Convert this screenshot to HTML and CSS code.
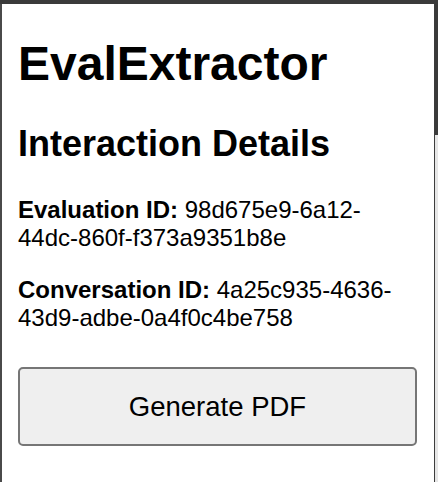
FILE: index.html
```html
<!DOCTYPE html>
<html>
<head>
<meta charset="utf-8">
<link rel="stylesheet" href="styles.css">
</head>
<body>
<div class="top-strip"></div>
<div class="frame">
  <div class="left-edge"></div>
  <main class="popup">
    <h1 class="title">EvalExtractor</h1>
    <h2 class="subtitle">Interaction Details</h2>
    <p class="field"><strong>Evaluation ID:</strong> 98d675e9-6a12-44dc-860f-f373a9351b8e</p>
    <p class="field"><strong>Conversation ID:</strong> 4a25c935-4636-43d9-adbe-0a4f0c4be758</p>
    <button class="generate">Generate PDF</button>
  </main>
  <div class="right-edge">
    <div class="right-dark"></div>
    <div class="right-light"></div>
  </div>
</div>
</body>
</html>
```
FILE: styles.css
```css
html, body {
  margin: 0;
  padding: 0;
  height: 100%;
  overflow: hidden;
}
body {
  display: flex;
  flex-direction: column;
  background: #ffffff;
  font-family: "Liberation Sans", Arial, sans-serif;
  color: #000;
}
.top-strip {
  height: 4px;
  background: #3a3a3a;
  flex: none;
}
.frame {
  flex: 1;
  display: flex;
  min-height: 0;
}
.left-edge {
  width: 2px;
  background: #4a4a4a;
  flex: none;
}
.popup {
  flex: 1;
  background: #fff;
  padding: 0 17px 0 16px;
  display: flex;
  flex-direction: column;
}
.right-edge {
  width: 4px;
  flex: none;
  display: flex;
  flex-direction: column;
  border-left: 1px solid #3c3c3c;
  box-sizing: border-box;
}
.right-dark {
  height: 131px;
  background: #3a3a3a;
}
.right-light {
  flex: 1;
  background: #e6e6e6;
}
.title {
  font-size: 48px;
  font-weight: bold;
  margin: 32px 0 0 0;
  line-height: normal;
}
.subtitle {
  font-size: 36px;
  font-weight: bold;
  margin: 32px 0 0 0;
  line-height: normal;
}
.field {
  font-size: 24px;
  margin: 31px 0 0 0;
  line-height: 28px;
}
.field + .field {
  margin-top: 24px;
}
.generate {
  margin-top: 35px;
  height: 79px;
  width: 100%;
  font-family: "Liberation Sans", Arial, sans-serif;
  font-size: 27.5px;
  color: #000;
  background: #efefef;
  border: 2px solid #767676;
  border-radius: 5px;
  padding: 0;
}
```
